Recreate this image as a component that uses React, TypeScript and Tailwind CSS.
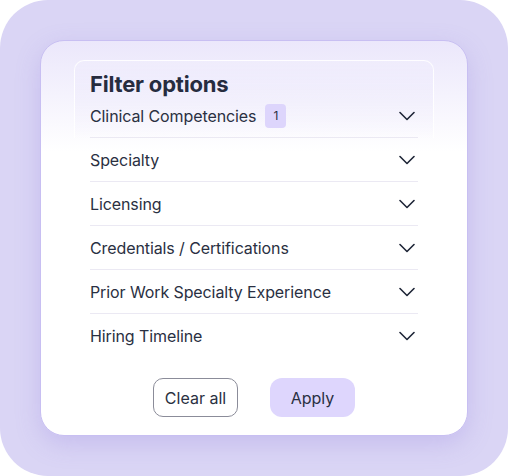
const FILTERS = [
  { label: "Clinical Competencies", count: 1 },
  { label: "Specialty" },
  { label: "Licensing" },
  { label: "Credentials / Certifications" },
  { label: "Prior Work Specialty Experience" },
  { label: "Hiring Timeline" },
];

function Chevron() {
  return (
    <svg width="16" height="16" viewBox="0 0 16 16" fill="none" className="mr-[3px] shrink-0">
      <path d="M1 4.5l7 7 7-7" stroke="#1f2638" strokeWidth="1.6" strokeLinecap="round" strokeLinejoin="round" />
    </svg>
  );
}

function FilterRow({ label, count, last }: { label: string; count?: number; last?: boolean }) {
  return (
    <div
      className={`flex h-[44px] items-center justify-between ${last ? "" : "border-b border-[#ebe9f3]"}`}
    >
      <div className="flex items-center gap-[9px]">
        <span className="text-[16px] tracking-[-0.1px] text-[#2a3042]">{label}</span>
        {count ? (
          <span className="flex h-[24px] w-[21px] items-center justify-center rounded-[4px] bg-[#ddd5fc] text-[12px] text-[#2a3042]">
            {count}
          </span>
        ) : null}
      </div>
      <Chevron />
    </div>
  );
}

export default function App() {
  const [first, ...rest] = FILTERS;
  return (
    <div className="h-[476px] w-[508px] bg-white" style={{ fontFamily: "Inter, 'Noto Sans', sans-serif" }}>
      <div className="h-full w-full rounded-[48px] bg-[#dad5f5] p-[40px]">
        <div className="flex h-[396px] flex-col rounded-[24px] border border-[#c8bff2] bg-gradient-to-b from-[#ebe7fb] to-white to-[28%] px-[33px] pt-[19px] shadow-[0_8px_24px_rgba(140,120,220,0.25)]">
          <div className="rounded-t-[10px] border-x border-t border-white/90 bg-gradient-to-b from-[#efecfc] to-white/0 px-[15px] pt-[13px]">
            <h2 className="text-[22px] font-bold leading-[20px] tracking-[-0.2px] text-[#262c3f]">Filter options</h2>
            <FilterRow label={first.label} count={first.count} />
          </div>
          <div className="px-[16px]">
            {rest.map((f, i) => (
              <FilterRow key={f.label} label={f.label} count={f.count} last={i === rest.length - 1} />
            ))}
          </div>
          <div className="mt-[20px] flex justify-center gap-[32px]">
            <button className="h-[39px] w-[85px] rounded-[10px] border border-[#8b8c99] bg-white text-[16px] text-[#2a3042]">
              Clear all
            </button>
            <button className="h-[39px] w-[85px] rounded-[12px] bg-[#ded6fd] text-[16px] text-[#2a3042]">
              Apply
            </button>
          </div>
        </div>
      </div>
    </div>
  );
}
